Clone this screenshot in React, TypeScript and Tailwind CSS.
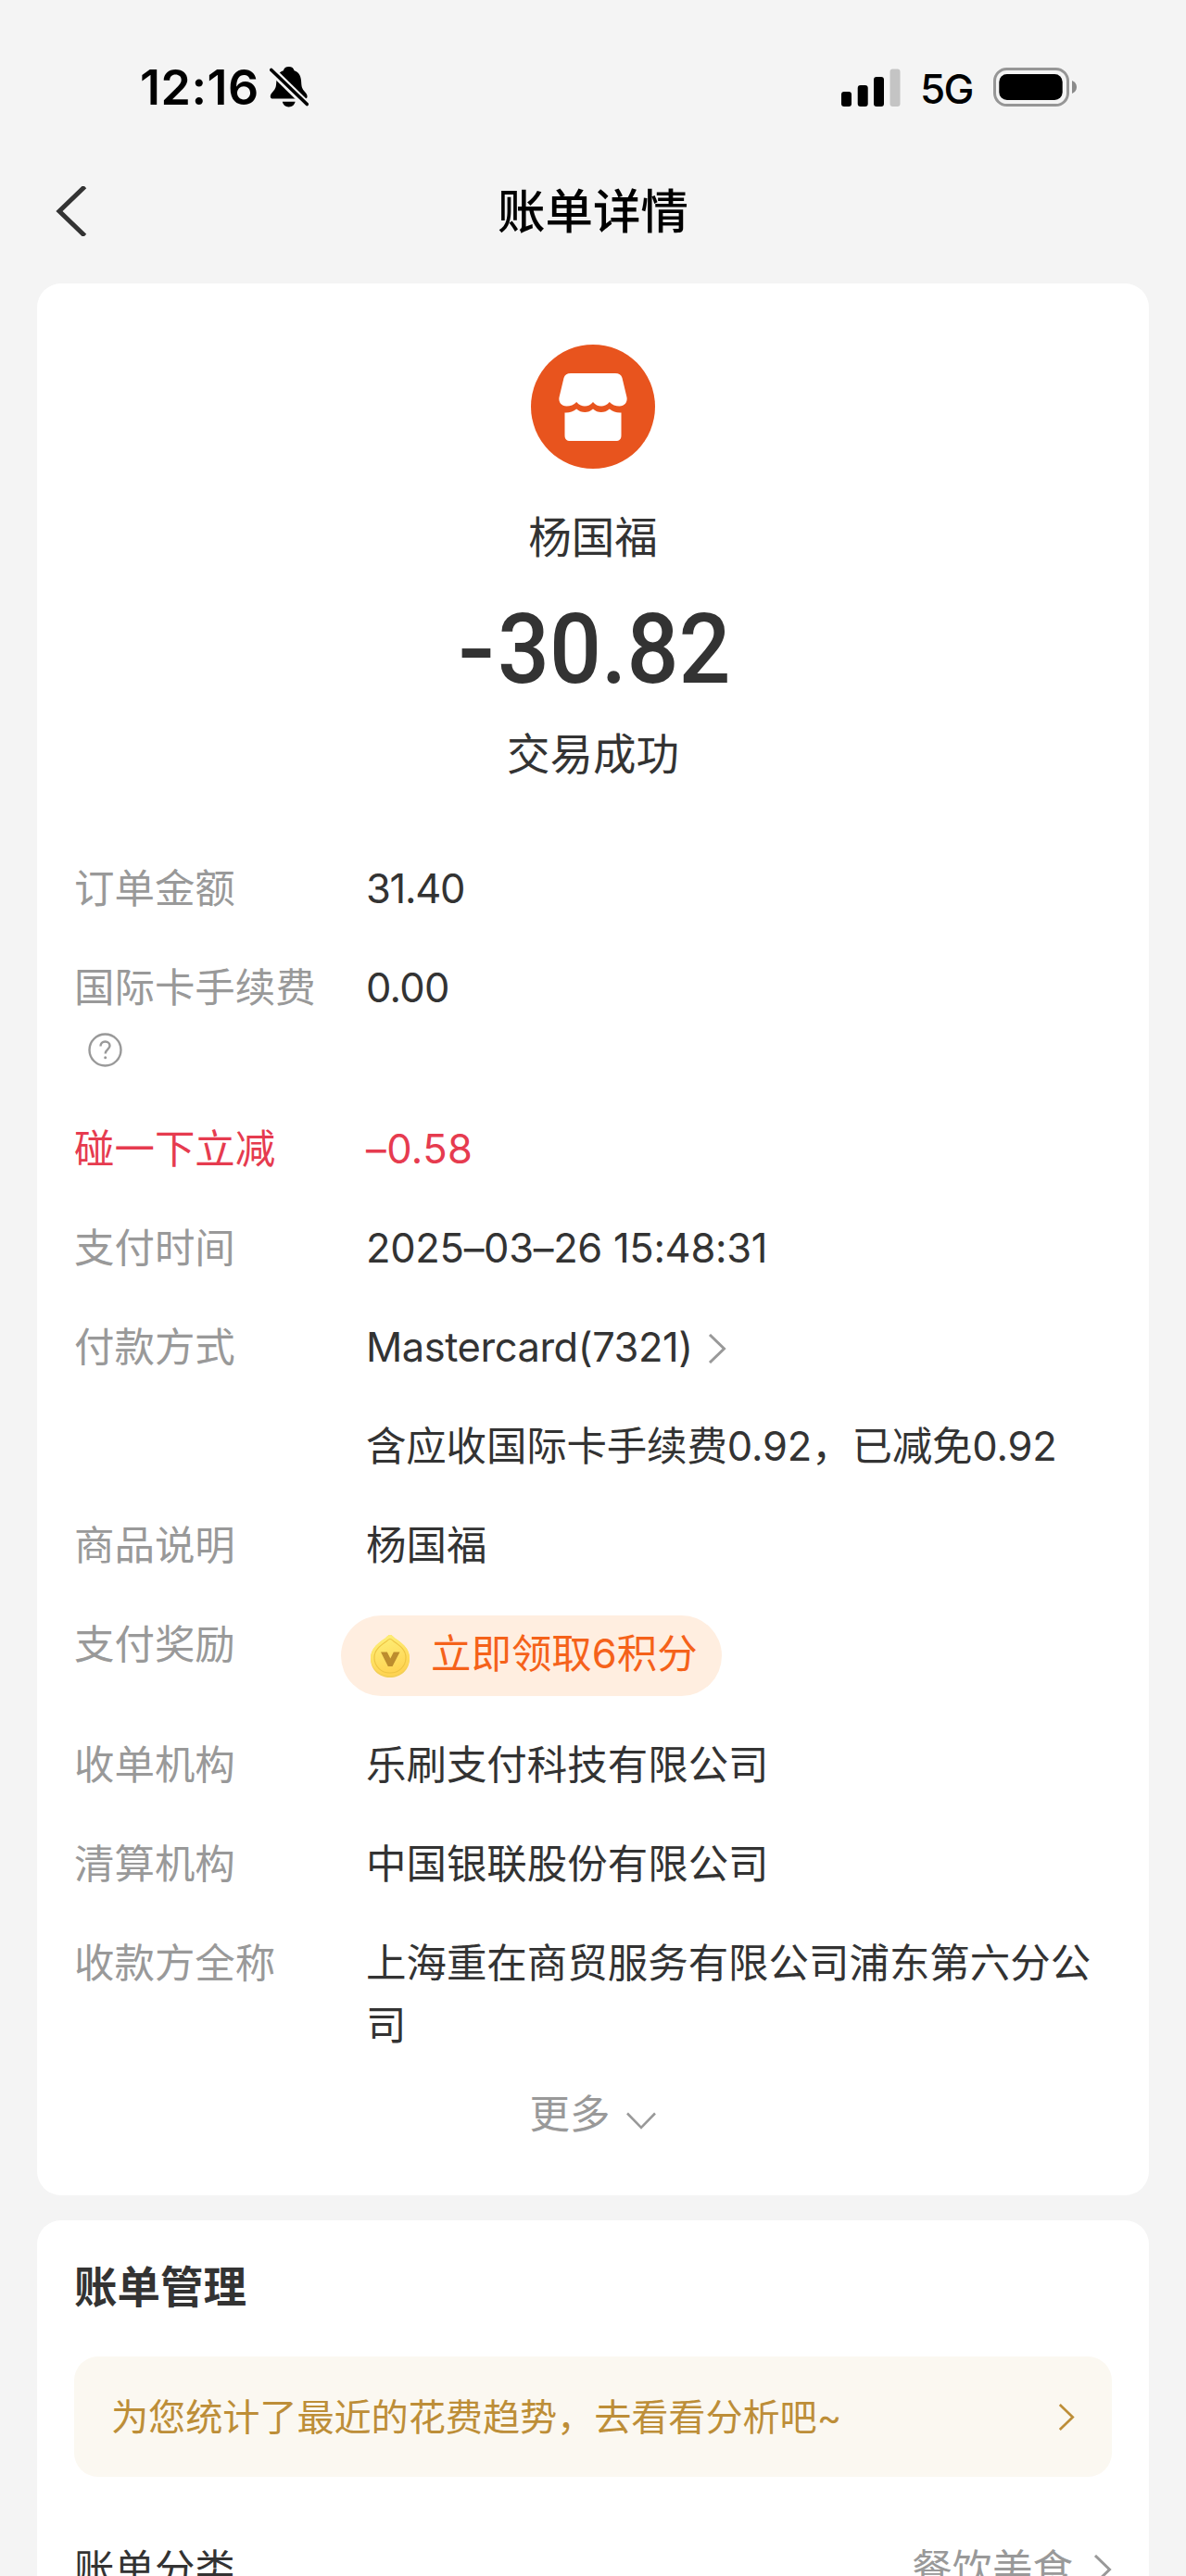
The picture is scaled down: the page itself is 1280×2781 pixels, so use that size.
import type { ReactNode } from "react";

interface IconProps {
  className?: string;
}

function ChevronRight({ className }: IconProps) {
  return (
    <svg
      viewBox="0 0 20 32"
      fill="none"
      stroke="currentColor"
      strokeWidth="3"
      className={className}
    >
      <path d="M2 1l15.5 15L2 31" />
    </svg>
  );
}

function ChevronDown({ className }: IconProps) {
  return (
    <svg
      viewBox="0 0 32 20"
      fill="none"
      stroke="currentColor"
      strokeWidth="2.6"
      className={className}
    >
      <path d="M1 1.5l15 15.5L31 1.5" />
    </svg>
  );
}

function BellOff() {
  return (
    <svg viewBox="0 0 42 44" className="ml-[11px] h-[44px] w-[42px]">
      <path d="M20.700 0c-3.200 0-5.200 1.600-5.900 4.200C9.500 6 7.500 10.500 7.300 16 7 22 6.500 23.500 3.500 27 1.500 29.300.8 30.500.8 32.200c0 1.500 1 2.300 2.800 2.300h34.200c1.800 0 2.800-.8 2.800-2.300 0-1.700-.7-2.900-2.700-5.200-3-3.500-3.500-5-3.800-11-.2-5.500-2.200-10-7.500-11.800C25.900 1.600 23.900 0 20.700 0z" />
      <path d="M13.800 37.800h13.800c-.7 3.500-3.400 5.700-6.900 5.700s-6.200-2.200-6.900-5.700z" />
      <path d="M1.800 3.500l38.700 38" stroke="#f4f4f4" strokeWidth="8.500" />
      <path
        d="M1.800 3.500l38.500 37"
        stroke="#000"
        strokeWidth="3.600"
        strokeLinecap="round"
      />
    </svg>
  );
}

function Signal() {
  return (
    <svg viewBox="0 0 64 41" className="h-[41px] w-[64px]">
      <rect x="0" y="25" width="11" height="16" rx="3" />
      <rect x="17.700" y="18" width="11" height="23" rx="3" />
      <rect x="35" y="9" width="11" height="32" rx="3" />
      <rect x="52.500" y="0.500" width="11" height="40.500" rx="3" fill="#c4c4c4" />
    </svg>
  );
}

function Battery() {
  return (
    <svg viewBox="0 0 91 42" className="h-[42px] w-[91px]">
      <rect
        x="1.500"
        y="1.500"
        width="79"
        height="39"
        rx="13"
        fill="none"
        stroke="#969696"
        strokeWidth="3"
      />
      <rect x="6.300" y="7" width="68.400" height="28" rx="8.500" />
      <path d="M85 14c3.200 1.200 5 3.800 5 7s-1.800 5.800-5 7z" fill="#8a8a8a" />
    </svg>
  );
}

function ShopLogo() {
  return (
    <svg viewBox="0 0 134 134" className="size-[134px]">
      <circle cx="67" cy="67" r="67" fill="#e8541e" />
      <path
        d="M43 31h48c4 0 6.500 1.500 7.500 5l5 21c1 5-2.500 9.500-8 9.500-4 0-8-1.200-10.700-4.500-3 3.500-6 4.500-8.800 4.500-3.500 0-6.500-1.500-9-4.500-2.500 3-5.500 4.500-9 4.500-2.800 0-5.800-1-8.800-4.500-2.700 3.300-6.700 4.500-10.700 4.500-5.500 0-9-4.500-8-9.500l5-21c1-3.500 3.500-5 7.500-5z"
        fill="#fff"
      />
      <path
        d="M36.500 73.500c5 .3 9-1 12.700-4 5 4.500 12.500 5 17.800 0 5.300 5 12.800 4.500 17.800 0 3.700 3 7.700 4.300 12.700 4V98c0 4-2 6-6 6h-49c-4 0-6-2-6-6z"
        fill="#fff"
      />
    </svg>
  );
}

function PointsCoin() {
  return (
    <svg viewBox="0 0 44 48" className="h-[48px] w-[44px] shrink-0">
      <defs>
        <linearGradient id="coin" x1="0" y1="0" x2="0.3" y2="1">
          <stop offset="0" stopColor="#fdf27c" />
          <stop offset="1" stopColor="#ffd452" />
        </linearGradient>
      </defs>
      <path
        d="M22 1c2 0 3.500 2 5 3.500C34 9 43 15.500 43 26.500 43 39 33.500 47 22 47S1 39 1 26.500C1 15.500 10 9 17 4.500 18.500 3 20 1 22 1z"
        fill="#f3cf55"
      />
      <path
        d="M22 1c2 0 3.500 2 5 3.500C34 9 43 15 43 25.500 43 37 33.500 45 22 45S1 37 1 25.500C1 15 10 9 17 4.500 18.500 3 20 1 22 1z"
        fill="url(#coin)"
      />
      <path
        d="M22 5.500c1.500 0 2.500 1.300 4 2.500C31.500 12 39 16.500 39 25.500 39 35 31.500 42 22 42S5 35 5 25.500C5 16.500 12.500 12 18 8c1.500-1.200 2.500-2.500 4-2.500z"
        fill="none"
        stroke="#eec544"
        strokeWidth="1.200"
      />
      <path d="M12 19.500h6.800l3.500 7 3.500-7h6.700L24.500 35h-4.700z" fill="#bd8d2e" />
    </svg>
  );
}

function HelpIcon() {
  return (
    <svg
      viewBox="0 0 37 37"
      fill="none"
      stroke="#999"
      strokeWidth="2.4"
      className="ml-[15px] size-[37px]"
    >
      <circle cx="18.500" cy="18.500" r="17" />
      <path d="M13.500 14.500c0-3 2-5 5-5s5 2 5 4.600c0 3.700-4.800 4-4.800 8.400" />
      <circle cx="18.700" cy="26.800" r="1.500" fill="#999" stroke="none" />
    </svg>
  );
}

interface RowProps {
  label?: ReactNode;
  children: ReactNode;
  highlight?: boolean;
}

function Row({ label, children, highlight }: RowProps) {
  return (
    <div className={highlight ? "flex text-[#e63b4f]" : "flex text-[#333]"}>
      <div
        className={
          highlight ? "w-[315px] shrink-0" : "w-[315px] shrink-0 text-[#999]"
        }
      >
        {label}
      </div>
      <div className="min-w-0 flex-1">{children}</div>
    </div>
  );
}

function StatusBar() {
  return (
    <div className="flex h-[188px] shrink-0 items-center justify-between pr-[117px] pl-[151px] text-black">
      <div className="flex items-center">
        <span className="text-[52px] font-semibold tracking-[0.5px]">12:16</span>
        <BellOff />
      </div>
      <div className="flex items-center">
        <Signal />
        <span className="mt-1 ml-[21px] text-[44px] font-medium tracking-[-1.5px]">
          5G
        </span>
        <span className="ml-[22px]">
          <Battery />
        </span>
      </div>
    </div>
  );
}

export default function App() {
  return (
    <div className="flex h-[2781px] w-[1280px] flex-col overflow-hidden bg-[#f4f4f4] font-['Inter','Noto_Sans_CJK_SC',sans-serif] text-[43.460px] leading-[67px]">
      <StatusBar />

      <header className="grid h-20 shrink-0 grid-cols-3 items-center">
        <svg
          viewBox="0 0 34 54"
          fill="none"
          stroke="#333"
          strokeWidth="5"
          className="ml-[60px] h-[54px] w-[34px]"
        >
          <path d="M31.500 0.500L4 27l27.500 26.500" />
        </svg>
        <h1 className="text-center text-[51.500px] font-medium text-black">
          账单详情
        </h1>
      </header>

      <main className="mt-[38px] flex shrink-0 flex-col gap-[27px] px-10">
        <section className="rounded-[26px] bg-white px-10 pt-[66px] pb-[54px]">
          <div className="flex flex-col items-center text-[46.500px] leading-[70px] text-[#333]">
            <ShopLogo />
            <p className="mt-[39px]">杨国福</p>
            <p className="mt-[31px] mb-[-1px] flex font-['Roboto',sans-serif] text-[106px] leading-[110px] font-medium">
              <span className="-mr-3 ml-1.5 origin-left scale-x-112">-</span>
              <span className="mr-1 origin-right scale-x-93">30.82</span>
            </p>
            <p className="mt-6">交易成功</p>
          </div>

          <div className="mt-[77px] flex flex-col gap-10">
            <Row label="订单金额">
              <span className="tracking-[-1.300px]">31.40</span>
            </Row>
            <Row
              label={
                <>
                  国际卡手续费
                  <span className="flex h-[67px] items-center">
                    <HelpIcon />
                  </span>
                </>
              }
            >
              <span className="tracking-[-0.700px]">0.00</span>
            </Row>
            <Row label="碰一下立减" highlight>
              <span className="tracking-[0.400px]">–0.58</span>
            </Row>
            <Row label="支付时间">
              <span className="tracking-[-0.300px]">2025–03–26 15:48:31</span>
            </Row>
            <Row label="付款方式">
              <span className="flex items-center">
                <span className="tracking-[-0.450px]">Mastercard(7321)</span>
                <ChevronRight className="mt-0.5 ml-[16px] h-8 w-5 text-[#999]" />
              </span>
            </Row>
            <Row>
              <span className="tracking-[-0.150px]">
                含应收国际卡手续费0.92，已减免0.92
              </span>
            </Row>
            <Row label="商品说明">杨国福</Row>
            <Row label="支付奖励">
              <div className="mt-[2px] mb-px -ml-[27px] flex h-[87px] w-[411px] items-center rounded-full bg-[#ffeee0] pl-[31px] text-[#f5621a]">
                <PointsCoin />
                <span className="-mt-1 ml-[22px]">立即领取6积分</span>
              </div>
            </Row>
            <Row label="收单机构">乐刷支付科技有限公司</Row>
            <Row label="清算机构">中国银联股份有限公司</Row>
            <Row label="收款方全称">上海重在商贸服务有限公司浦东第六分公司</Row>
          </div>

          <div className="mt-[29px] flex items-center justify-center text-[#999]">
            更多
            <ChevronDown className="mt-3.5 ml-[18px] h-5 w-8" />
          </div>
        </section>

        <section className="rounded-t-[26px] bg-white px-10 pt-[37px]">
          <h2 className="text-[46.500px] leading-[70px] font-bold text-[#333]">
            账单管理
          </h2>
          <div className="mt-10 flex h-[130px] items-center justify-between rounded-[26px] bg-[#fbf8f1] px-10 text-[40.200px] text-[#bd8e38]">
            <span className="tracking-[-0.100px]">
              为您统计了最近的花费趋势，去看看分析吧~
            </span>
            <ChevronRight className="h-[29px] w-[18px]" />
          </div>
          <div className="mt-[66px] flex items-center justify-between text-[#333]">
            账单分类
            <span className="flex items-center text-[#999]">
              餐饮美食
              <ChevronRight className="ml-[22px] h-8 w-5" />
            </span>
          </div>
        </section>
      </main>
    </div>
  );
}
